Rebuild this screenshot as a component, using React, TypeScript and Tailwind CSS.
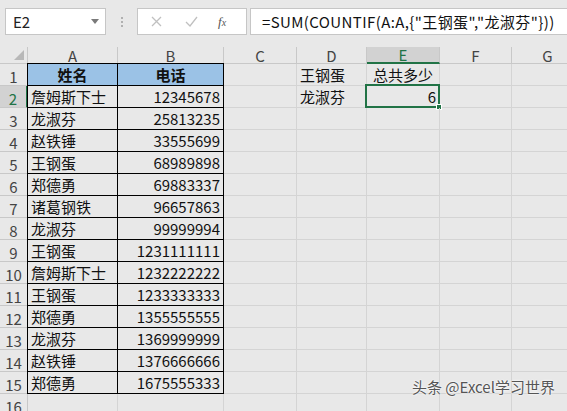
import React from 'react'

const COLS = ['A', 'B', 'C', 'D', 'E', 'F', 'G']

const TABLE: [string, string][] = [
  ['姓名', '电话'],
  ['詹姆斯下士', '12345678'],
  ['龙淑芬', '25813235'],
  ['赵铁锤', '33555699'],
  ['王钢蛋', '68989898'],
  ['郑德勇', '69883337'],
  ['诸葛钢铁', '96657863'],
  ['龙淑芬', '99999994'],
  ['王钢蛋', '1231111111'],
  ['詹姆斯下士', '1232222222'],
  ['王钢蛋', '1233333333'],
  ['郑德勇', '1355555555'],
  ['龙淑芬', '1369999999'],
  ['赵铁锤', '1376666666'],
  ['郑德勇', '1675555333'],
]

const FORMULA = '=SUM(COUNTIF(A:A,{"王钢蛋","龙淑芬"}))'

const font = "font-['Microsoft_YaHei','Noto_Sans_CJK_SC',sans-serif]"

function RowCells({ row }: { row: number }) {
  const inTable = row <= 15
  const [a, b] = inTable ? TABLE[row - 1] : ['', '']
  const isHead = row === 1
  const selected = row === 2
  const base = 'h-[22px] border-r border-b flex items-center px-[3px] text-[15px] text-[#111] leading-none'
  const tableShadowA =
    row === 1
      ? 'shadow-[-1px_0_0_#000,0_-1px_0_#000,-1px_-1px_0_#000]'
      : 'shadow-[-1px_0_0_#000]'
  return (
    <>
      <div
        className={`h-[22px] border-b border-[#c8c8c8] flex items-center justify-center text-[15px] leading-none ${
          selected
            ? 'bg-[#d2d2d2] border-r-2 border-r-[#217346] text-[#217346]'
            : 'bg-[#e8e8e8] border-r text-[#444]'
        }`}
      >
        <span className="pt-[3px]">{row}</span>
      </div>
      <div
        className={`${base} ${inTable ? `border-black ${tableShadowA}` : 'border-[#d4d4d4]'} ${
          isHead ? 'bg-[#9bc2e6] justify-center font-bold' : ''
        }`}
      >
        {a}
      </div>
      <div
        className={`${base} ${inTable ? 'border-black' : 'border-[#d4d4d4]'} ${
          row === 1 ? 'shadow-[0_-1px_0_#000]' : ''
        } ${isHead ? 'bg-[#9bc2e6] justify-center font-bold' : 'justify-end'}`}
      >
        {b}
      </div>
      <div className={`${base} border-[#d4d4d4]`} />
      <div className={`${base} border-[#d4d4d4]`}>
        {row === 1 ? '王钢蛋' : row === 2 ? '龙淑芬' : ''}
      </div>
      <div className={`${base} border-[#d4d4d4] relative ${row === 2 ? 'justify-end' : 'justify-center'}`}>
        {row === 1 ? '总共多少' : row === 2 ? '6' : ''}
        {row === 2 ? (
          <div className="absolute -left-[2px] -top-[2px] -right-[1px] -bottom-[1px] border-2 border-[#217346]">
            <div className="absolute -right-[4px] -bottom-[4px] w-[6px] h-[6px] bg-[#217346] border border-white" />
          </div>
        ) : null}
      </div>
      <div className={`${base} border-[#d4d4d4]`} />
      <div className={`${base} border-[#d4d4d4]`} />
    </>
  )
}

export default function App() {
  return (
    <div className={`relative w-[567px] h-[411px] overflow-hidden bg-[#e8e8e8] ${font}`}>
      {/* formula bar */}
      <div className="h-[47px] flex items-start pt-[8px]">
        <div className="ml-[5px] w-[101px] h-[27px] bg-white border border-[#c6c6c6] flex items-center justify-between pl-[7px] pr-[6px]">
          <span className="text-[15px] text-[#222] leading-none">E2</span>
          <svg width="8" height="5" viewBox="0 0 8 5">
            <path d="M0 0h8L4 5z" fill="#7a7a7a" />
          </svg>
        </div>
        <div className="w-[31px] h-[27px] flex flex-col items-center justify-center gap-[2px]">
          <span className="w-[2px] h-[2px] bg-[#b0b0b0]" />
          <span className="w-[2px] h-[2px] bg-[#b0b0b0]" />
          <span className="w-[2px] h-[2px] bg-[#b0b0b0]" />
        </div>
        <div className="w-[110px] h-[27px] bg-white border border-[#c6c6c6] flex items-center">
          <svg className="ml-[13px]" width="11" height="11" viewBox="0 0 11 11">
            <path d="M1 1l9 9M10 1l-9 9" stroke="#c0c0c0" strokeWidth="1.3" />
          </svg>
          <svg className="ml-[23px]" width="13" height="11" viewBox="0 0 13 11">
            <path d="M1 6l4 4 7-9" stroke="#c0c0c0" strokeWidth="1.3" fill="none" />
          </svg>
          <span className="ml-[20px] text-[13px] italic text-[#555] font-['Liberation_Serif',serif] leading-none">
            f<span className="text-[10px]">x</span>
          </span>
        </div>
        <div className="ml-[3px] flex-1 -mr-[4px] h-[27px] bg-white border border-[#c6c6c6] flex items-center pl-[11px]">
          <span className="text-[15px] tracking-[0.4px] text-[#111] leading-none whitespace-nowrap">{FORMULA}</span>
        </div>
      </div>

      {/* sheet */}
      <div className="grid grid-cols-[28px_90px_106px_73px_70px_73px_72px_72px] w-[584px]">
        <div className="h-[17px] border-r border-b border-[#c8c8c8] bg-[#e8e8e8] flex items-end justify-end pr-[3px] pb-[3px]">
          <svg width="10" height="10" viewBox="0 0 10 10">
            <path d="M10 0v10H0z" fill="#b8b8b8" />
          </svg>
        </div>
        {COLS.map((c) => (
          <div
            key={c}
            className={`h-[17px] border-r border-[#c8c8c8] flex items-center justify-center text-[15px] leading-none ${
              c === 'E'
                ? 'bg-[#d2d2d2] border-b-2 border-b-[#217346] text-[#217346]'
                : 'bg-[#e8e8e8] border-b text-[#444]'
            }`}
          >
            {c}
          </div>
        ))}
        {Array.from({ length: 16 }, (_, i) => (
          <RowCells key={i} row={i + 1} />
        ))}
      </div>

      <div className="absolute left-[412px] top-[379px] text-[15px] text-[#555] leading-none whitespace-nowrap [text-shadow:0_0_2px_#fff,0_0_2px_#fff] font-['Noto_Sans_CJK_SC',sans-serif]">
        头条 @Excel学习世界
      </div>
    </div>
  )
}
